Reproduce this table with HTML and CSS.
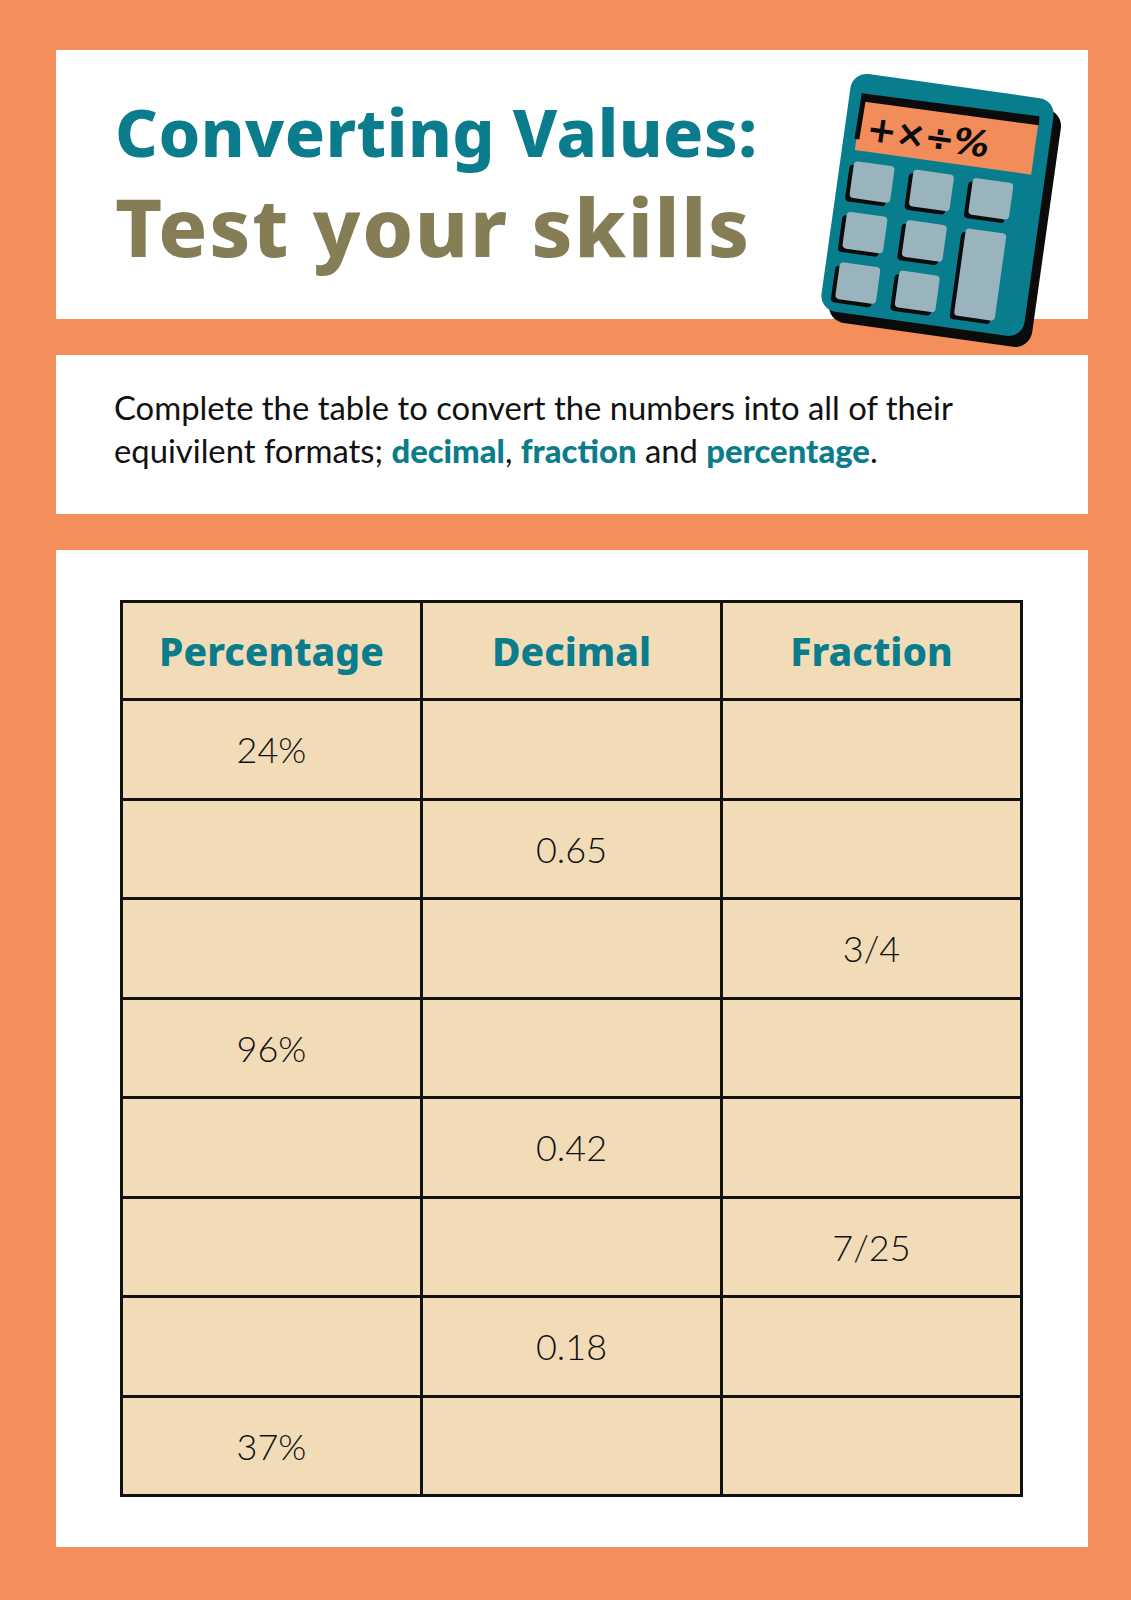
FILE: index.html
```html
<!DOCTYPE html>
<html lang="en">
<head>
<meta charset="utf-8">
<title>Converting Values: Test your skills</title>
<link rel="stylesheet" href="styles.css">
</head>
<body>
<main class="sheet">
  <section class="card card-title">
    <h1 class="title">
      <span class="title-top">Converting Values:</span>
      <span class="title-bottom">Test your skills</span>
    </h1>
    <svg class="calculator" viewBox="0 0 250 290" width="250" height="290" aria-hidden="true">
      <g transform="rotate(8 125 140)">
        <rect x="31" y="30" width="205" height="240" rx="17" fill="#0b0b0b"/>
        <rect x="22" y="20" width="205" height="240" rx="16" fill="#087d8d"/>
        <rect x="35" y="40" width="178" height="57" fill="#f28d5b"/>
        <path d="M34 40 L213 38 L214 47 L38 48 Z" fill="#0b0b0b"/>
        <path d="M34 40 L39 40 L38 86 L33 86 Z" fill="#0b0b0b"/>
        <text x="44" y="86" class="calc-symbols">+×÷%</text>
        <g fill="#0b0b0b">
          <rect x="32" y="112" width="41" height="37" rx="4"/>
          <rect x="92" y="112" width="41" height="37" rx="4"/>
          <rect x="152" y="112" width="41" height="37" rx="4"/>
          <rect x="32" y="163" width="41" height="37" rx="4"/>
          <rect x="92" y="163" width="41" height="37" rx="4"/>
          <rect x="152" y="163" width="41" height="88" rx="4"/>
          <rect x="32" y="214" width="41" height="37" rx="4"/>
          <rect x="92" y="214" width="41" height="37" rx="4"/>
        </g>
        <g fill="#9ab4bd">
          <rect x="36" y="108" width="41" height="37" rx="4"/>
          <rect x="96" y="108" width="41" height="37" rx="4"/>
          <rect x="156" y="108" width="41" height="37" rx="4"/>
          <rect x="36" y="159" width="41" height="37" rx="4"/>
          <rect x="96" y="159" width="41" height="37" rx="4"/>
          <rect x="156" y="159" width="41" height="88" rx="4"/>
          <rect x="36" y="210" width="41" height="37" rx="4"/>
          <rect x="96" y="210" width="41" height="37" rx="4"/>
        </g>
      </g>
    </svg>
  </section>

  <section class="card card-intro">
    <p class="intro">Complete the table to convert the numbers into all of their<br>equivilent formats; <strong>decimal</strong>, <strong>fraction</strong> and <strong>percentage</strong>.</p>
  </section>

  <section class="card card-table">
    <table class="convert">
      <thead>
        <tr><th>Percentage</th><th>Decimal</th><th>Fraction</th></tr>
      </thead>
      <tbody>
        <tr><td>24%</td><td></td><td></td></tr>
        <tr><td></td><td>0.65</td><td></td></tr>
        <tr><td></td><td></td><td>3/4</td></tr>
        <tr><td>96%</td><td></td><td></td></tr>
        <tr><td></td><td>0.42</td><td></td></tr>
        <tr><td></td><td></td><td>7/25</td></tr>
        <tr><td></td><td>0.18</td><td></td></tr>
        <tr><td>37%</td><td></td><td></td></tr>
      </tbody>
    </table>
  </section>
</main>
</body>
</html>
```

FILE: styles.css
```css
html, body {
  margin: 0;
  padding: 0;
}

body {
  background: #f48f5c;
  width: 1131px;
  min-height: 1600px;
}

.sheet {
  display: flex;
  flex-direction: column;
  gap: 36px;
  padding: 50px 43px 53px 56px;
}

.card {
  background: #ffffff;
  box-sizing: border-box;
}

.card-title {
  position: relative;
  height: 269px;
  padding: 45px 0 0 59px;
}

.title {
  margin: 0;
  font-family: "Noto Sans", "Open Sans", sans-serif;
  font-weight: 800;
}

.title-top {
  display: block;
  font-size: 66.5px;
  line-height: 72px;
  color: #0a7c8c;
  letter-spacing: 0.5px;
}

.title-bottom {
  display: block;
  margin-top: 16px;
  font-size: 81px;
  line-height: 86px;
  color: #857d55;
  letter-spacing: 1.7px;
}

.calculator {
  position: absolute;
  left: 757px;
  top: 15px;
  overflow: visible;
}

.calc-symbols {
  font-family: "DejaVu Sans", sans-serif;
  font-weight: 700;
  font-style: italic;
  font-size: 36px;
  fill: #0b0b0b;
  letter-spacing: -1px;
}

.card-intro {
  height: 159px;
  padding: 31px 20px 0 58px;
}

.intro {
  margin: 0;
  font-family: "Lato", "Open Sans", sans-serif;
  font-size: 32.8px;
  line-height: 43px;
  color: #111111;
  white-space: nowrap;
}

.intro strong {
  font-weight: 900;
  color: #0a7c8c;
}

.card-table {
  height: 997px;
  padding: 50px 65px 50px 64px;
}

.convert {
  width: 903px;
  border-collapse: collapse;
  table-layout: fixed;
  background: #f2dcb8;
  font-family: "Lato", "Open Sans", sans-serif;
}

.convert th,
.convert td {
  border: 3px solid #111111;
  text-align: center;
  vertical-align: middle;
  padding: 0;
}

.convert th {
  height: 95px;
  font-family: "Noto Sans", "Open Sans", sans-serif;
  font-size: 39px;
  font-weight: 800;
  color: #0a7c8c;
}

.convert td {
  height: 96.5px;
  font-size: 36px;
  font-weight: 300;
  color: #111111;
}
```
